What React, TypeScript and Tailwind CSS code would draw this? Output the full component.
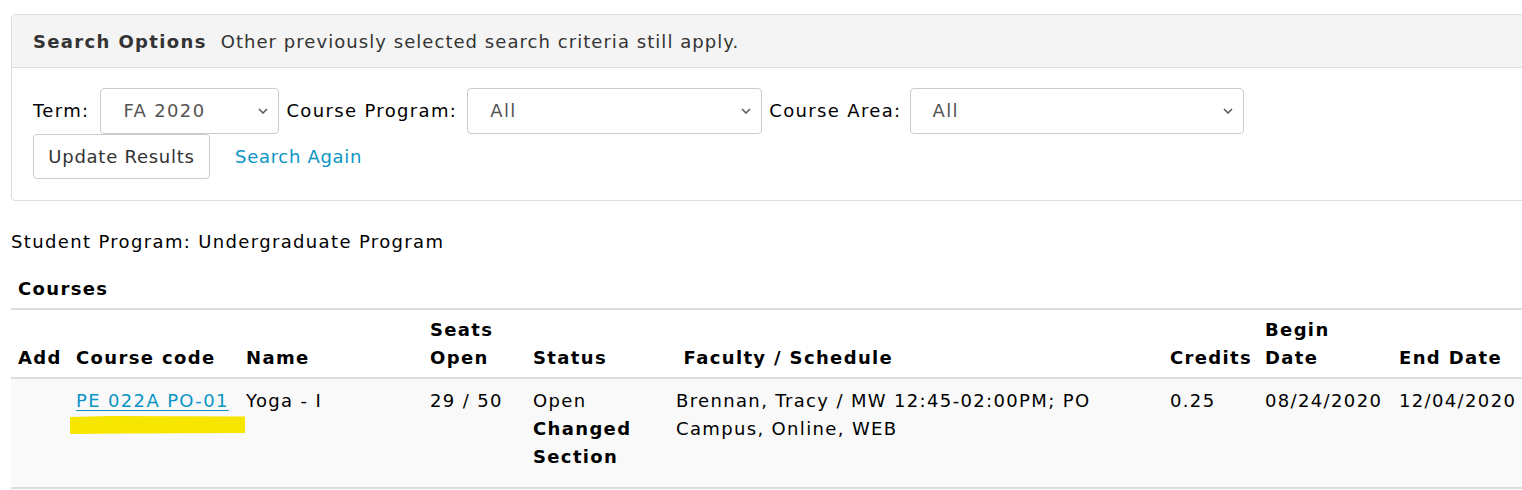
import React from 'react';

const Chevron = () => (
  <svg className="pointer-events-none absolute right-[10px] top-1/2 -translate-y-1/2" width="10" height="6" viewBox="0 0 10 6">
    <path d="M1 1l4 4 4-4" fill="none" stroke="#555" strokeWidth="1.5" />
  </svg>
);

const Select = ({ value, width }: { value: string; width: string }) => (
  <div className={`relative inline-flex h-[46px] items-center rounded-[4px] border border-[#ccc] bg-white pl-[22px] text-[#555] ${width}`}>
    {value}
    <Chevron />
  </div>
);

const cols = [
  { label: 'Add', w: 'w-[58px]' },
  { label: 'Course code', w: 'w-[170px]' },
  { label: 'Name', w: 'w-[184px]' },
  { label: 'Seats Open', w: 'w-[103px]' },
  { label: 'Status', w: 'w-[143px]' },
  { label: '\u00a0Faculty / Schedule', w: 'w-[494px]' },
  { label: 'Credits', w: 'w-[95px]' },
  { label: 'Begin Date', w: 'w-[134px]' },
  { label: 'End Date', w: 'w-[140px]' },
];

export default function App() {
  return (
    <div className="h-[490px] w-[1522px] overflow-hidden bg-white pt-[14px] pl-[11px] text-[18px] leading-[28px] tracking-[1.35px] text-black" style={{ fontFamily: '"DejaVu Sans", Verdana, sans-serif' }}>
      {/* search options panel */}
      <div className="w-[1530px] rounded-tl-[4px] rounded-bl-[4px] border border-[#ddd]">
        <div className="flex h-[53px] items-center border-b border-[#ddd] bg-[#f4f4f4] pl-[21px] pt-[2px] text-[#333]">
          <span className="font-bold">Search Options</span>
          <span className="ml-[14px] tracking-[1.05px]">Other previously selected search criteria still apply.</span>
        </div>
        <div className="px-[21px] pt-[20px] pb-[21px]">
          <div className="flex items-center">
            <span>Term:</span>
            <span className="ml-[11px]"><Select value="FA 2020" width="w-[179px]" /></span>
            <span className="ml-[7px]">Course Program:</span>
            <span className="ml-[10px]"><Select value="All" width="w-[295px]" /></span>
            <span className="ml-[7px]">Course Area:</span>
            <span className="ml-[8px]"><Select value="All" width="w-[334px]" /></span>
          </div>
          <div className="flex items-center">
            <button className="h-[45px] w-[177px] rounded-[4px] border border-[#ccc] bg-white tracking-[0.75px] text-[#333]">Update Results</button>
            <a className="ml-[25px] tracking-[0.7px] text-[#0b95c4]">Search Again</a>
          </div>
        </div>
      </div>

      <div className="mt-[27px]">Student Program: Undergraduate Program</div>
      <div className="mt-[19px] pl-[7px] font-bold">Courses</div>

      {/* courses table */}
      <div className="mt-[5px] w-[1530px]">
        <div className="flex items-end border-y-2 border-[#ddd] pt-[6px] pb-[5px] font-bold">
          {cols.map(c => (
            <div key={c.label} className={`${c.w} shrink-0 pl-[7px] leading-[28px]`}>
              {c.label === 'Seats Open' || c.label === 'Begin Date' ? (
                <>
                  {c.label.split(' ')[0]}
                  <br />
                  {c.label.split(' ')[1]}
                </>
              ) : (
                c.label
              )}
            </div>
          ))}
        </div>
        <div className="flex items-start border-b-2 border-[#ddd] bg-[#f9f9f9] pt-[8px] pb-[16px]">
          <div className="w-[58px] shrink-0 pl-[7px]"></div>
          <div className="relative w-[170px] shrink-0 pl-[7px]">
            <a className="text-[#0b95c4] underline underline-offset-[3px]">PE 022A PO-01</a>
            <svg className="absolute left-[1px] top-[29px]" width="176" height="19" viewBox="0 0 176 19">
              <path d="M0 1 L40 0 L175 0.5 L175 17 L60 17.5 L0 18 Z" fill="#f7e600" />
            </svg>
          </div>
          <div className="w-[184px] shrink-0 pl-[7px]">Yoga - I</div>
          <div className="w-[103px] shrink-0 pl-[7px]">29 / 50</div>
          <div className="w-[143px] shrink-0 pl-[7px]">
            Open
            <div className="font-bold">Changed Section</div>
          </div>
          <div className="w-[494px] shrink-0 pl-[7px]">Brennan, Tracy / MW 12:45-02:00PM; PO Campus, Online, WEB</div>
          <div className="w-[95px] shrink-0 pl-[7px]">0.25</div>
          <div className="w-[134px] shrink-0 pl-[7px]">08/24/2020</div>
          <div className="w-[140px] shrink-0 pl-[7px]">12/04/2020</div>
        </div>
      </div>
    </div>
  );
}
